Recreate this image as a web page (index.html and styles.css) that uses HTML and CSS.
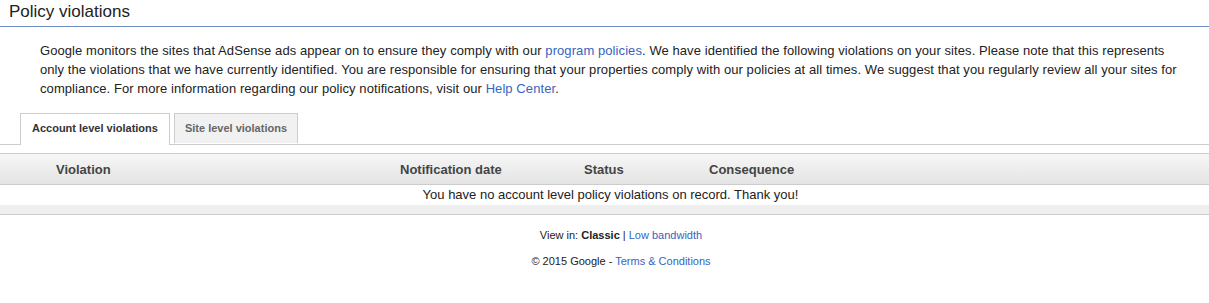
FILE: index.html
```html
<!DOCTYPE html>
<html lang="en">

<head>
    <meta charset="UTF-8">
    <title>Policy violations</title>
    <link rel="stylesheet" href="styles.css">
</head>

<body>
    <h1 class="page-title">Policy violations</h1>

    <p class="intro">
        Google monitors the sites that AdSense ads appear on to ensure they comply with our
        <a href="#">program policies</a>. We have identified the following violations on your sites. Please note
        that this represents only the violations that we have currently identified. You are responsible for ensuring
        that your properties comply with our policies at all times. We suggest that you regularly review all your
        sites for compliance. For more information regarding our policy notifications, visit our
        <a href="#">Help Center</a>.
    </p>

    <div class="tabs">
        <div class="tab active">Account level violations</div>
        <div class="tab">Site level violations</div>
    </div>

    <div class="violations">
        <div class="head-row">
            <div class="col col-violation">Violation</div>
            <div class="col col-date">Notification date</div>
            <div class="col col-status">Status</div>
            <div class="col col-consequence">Consequence</div>
        </div>
        <div class="empty-row">You have no account level policy violations on record. Thank you!</div>
        <div class="table-foot"></div>
    </div>

    <div class="footer">
        <div class="footer-line">View in: <b>Classic</b> | <a href="#">Low bandwidth</a></div>
        <div class="footer-line">&copy; 2015 Google - <a href="#">Terms &amp; Conditions</a></div>
    </div>
</body>

</html>
```

FILE: styles.css
```css
body {
    margin: 0;
    font-family: Arial, "Liberation Sans", sans-serif;
    color: #222;
    background: #fff;
}

a {
    color: #3764c0;
    text-decoration: none;
}

.page-title {
    margin: 0;
    padding: 1px 9px 0;
    height: 25px;
    font-size: 17px;
    font-weight: normal;
    line-height: 22px;
    color: #222;
    border-bottom: 1px solid #6d8fc4;
}

.intro {
    margin: 0;
    padding: 14px 30px 0 40px;
    font-size: 13px;
    line-height: 19px;
    letter-spacing: 0.08px;
    color: #222;
}

.tabs {
    display: flex;
    gap: 4px;
    margin-top: 15px;
    padding-left: 20px;
    border-bottom: 1px solid #ccc;
    height: 31px;
}

.tab {
    height: 29px;
    padding: 0 10px;
    font-size: 11px;
    font-weight: bold;
    line-height: 28px;
    color: #666;
    background: #f1f1f1;
    border: 1px solid #ccc;
    border-bottom: none;
}

.tab.active {
    height: 31px;
    padding: 0 11px;
    color: #333;
    background: #fff;
}

.violations {
    margin-top: 8px;
    border-top: 1px solid #ccc;
    border-bottom: 1px solid #ccc;
}

.head-row {
    display: flex;
    height: 30px;
    align-items: center;
    background: linear-gradient(#f6f6f6, #e4e4e4);
    border-bottom: 1px solid #ccc;
    font-size: 13px;
    font-weight: bold;
    color: #444;
}

.col-violation {
    padding-left: 56px;
    width: 344px;
}

.col-date {
    width: 184px;
}

.col-status {
    width: 125px;
}

.empty-row {
    height: 20px;
    padding-left: 12px;
    text-align: center;
    font-size: 13px;
    line-height: 19px;
    color: #222;
}

.table-foot {
    height: 9px;
    background: #efefef;
}

.footer {
    padding: 13px 0 0 33px;
    text-align: center;
    font-size: 11px;
    color: #222;
}

.footer-line {
    line-height: 14px;
    margin-bottom: 12px;
}
```
